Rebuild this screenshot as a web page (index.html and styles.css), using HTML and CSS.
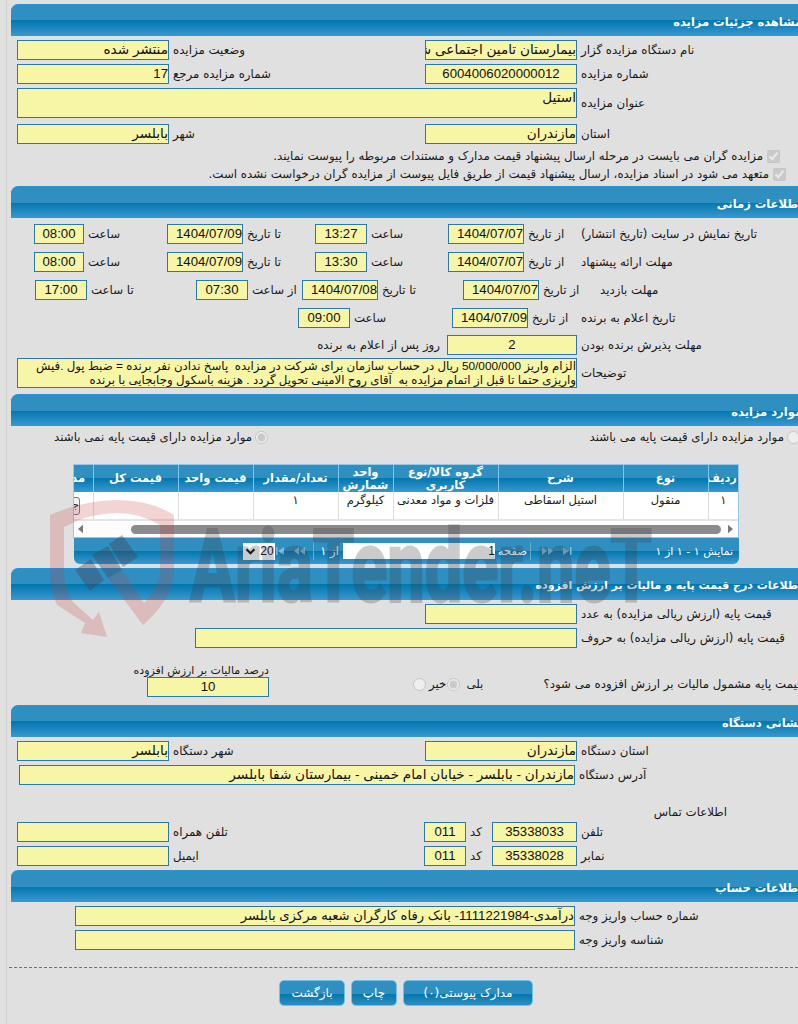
FILE: index.html
```html
<!DOCTYPE html>
<html lang="fa">
<head>
<meta charset="utf-8">
<title>مشاهده جزئیات مزایده</title>
<link rel="stylesheet" href="styles.css">
</head>
<body>
<main class="page">

<section class="section s1">
  <h2 class="bar">مشاهده جزئیات مزایده</h2>
  <div class="grid g-main">
    <div class="field">منتشر شده</div><div class="lab">وضعیت مزایده</div>
    <div class="field">بیمارستان تامین اجتماعی شهید بهشتی بابلسر</div><div class="lab">نام دستگاه مزایده گزار</div>
    <div class="field num">17</div><div class="lab">شماره مزایده مرجع</div>
    <div class="field num center">6004006020000012</div><div class="lab">شماره مزایده</div>
    <div class="field span3 tall">استیل</div><div class="lab">عنوان مزایده</div>
  </div>
  <div class="grid g-main after-tall">
    <div class="field">بابلسر</div><div class="lab">شهر</div>
    <div class="field">مازندران</div><div class="lab">استان</div>
  </div>
  <div class="check c1"><input type="checkbox" checked disabled><span>مزایده گران می بایست در مرحله ارسال پیشنهاد قیمت مدارک و مستندات مربوطه را پیوست نمایند.</span></div>
  <div class="check c2"><input type="checkbox" checked disabled><span>متعهد می شود در اسناد مزایده، ارسال پیشنهاد قیمت از طریق فایل پیوست از مزایده گران درخواست نشده است.</span></div>
</section>

<section class="section s2">
  <h2 class="bar">اطلاعات زمانی</h2>
  <div class="grid t-row t-a">
    <div class="field num center">08:00</div><div class="lab">ساعت</div>
    <div class="field num">1404/07/09</div><div class="lab">تا تاریخ</div>
    <div class="field num center">13:27</div><div class="lab">ساعت</div>
    <div class="field num">1404/07/07</div><div class="lab">از تاریخ</div>
    <div class="lab">تاریخ نمایش در سایت (تاریخ انتشار)</div>
  </div>
  <div class="grid t-row t-a">
    <div class="field num center">08:00</div><div class="lab">ساعت</div>
    <div class="field num">1404/07/09</div><div class="lab">تا تاریخ</div>
    <div class="field num center">13:30</div><div class="lab">ساعت</div>
    <div class="field num">1404/07/07</div><div class="lab">از تاریخ</div>
    <div class="lab">مهلت ارائه پیشنهاد</div>
  </div>
  <div class="grid t-row t-b">
    <div class="field num center">17:00</div><div class="lab">تا ساعت</div>
    <div class="field num center">07:30</div><div class="lab">از ساعت</div>
    <div class="field num">1404/07/08</div><div class="lab">تا تاریخ</div>
    <div class="field num">1404/07/07</div><div class="lab">از تاریخ</div>
    <div class="lab visit">مهلت بازدید</div>
  </div>
  <div class="grid t-row t-c">
    <div class="field num center">09:00</div><div class="lab">ساعت</div>
    <div class="field num">1404/07/09</div><div class="lab">از تاریخ</div>
    <div class="lab">تاریخ اعلام به برنده</div>
  </div>
  <div class="grid t-row t-d">
    <div class="lab end">روز پس از اعلام به برنده</div>
    <div class="field num center">2</div>
    <div class="lab">مهلت پذیرش برنده بودن</div>
  </div>
  <div class="grid t-e">
    <div class="field note">الزام واریز 50/000/000 ریال در حساب سازمان برای شرکت در مزایده &nbsp;پاسخ ندادن نفر برنده = ضبط پول .فیش واریزی حتما تا قبل از اتمام مزایده به &nbsp;آقای روح الامینی تحویل گردد . هزینه باسکول وجابجایی با برنده</div>
    <div class="lab">توضیحات</div>
  </div>
</section>

<section class="section s3">
  <h2 class="bar">موارد مزایده</h2>
  <div class="radios">
    <label class="radio r-right"><input type="radio" disabled><span>موارد مزایده دارای قیمت پایه می باشند</span></label>
    <label class="radio r-left"><input type="radio" checked disabled><span>موارد مزایده دارای قیمت پایه نمی باشند</span></label>
  </div>
  <div class="gridbox">
    <div class="tablewrap">
      <table class="items">
        <colgroup>
          <col class="c30"><col class="c85"><col class="c125"><col class="c105"><col class="c55"><col class="c85"><col class="c75"><col class="c85"><col class="c60">
        </colgroup>
        <thead>
          <tr><th>ردیف</th><th>نوع</th><th>شرح</th><th>گروه کالا/نوع کاربری</th><th>واحد شمارش</th><th>تعداد/مقدار</th><th>قیمت واحد</th><th>قیمت کل</th><th>مدارک</th></tr>
        </thead>
        <tbody>
          <tr><td>۱</td><td>منقول</td><td>استیل اسقاطی</td><td>فلزات و مواد معدنی</td><td>کیلوگرم</td><td>۱</td><td></td><td></td><td><span class="mini">جزئیات</span></td></tr>
        </tbody>
      </table>
    </div>
    <div class="hscroll">
      <svg class="sarrow" viewBox="0 0 6 10" aria-hidden="true"><path d="M6 0 0 5 6 10Z"/></svg>
      <div class="thumb"></div>
      <svg class="sarrow end-arrow" viewBox="0 0 6 10" aria-hidden="true"><path d="M0 0 6 5 0 10Z"/></svg>
    </div>
  </div>
  <div class="pager">
    <span class="p-info">نمایش ۱ - ۱ از ۱</span>
    <span class="p-nav">
      <svg class="pico" viewBox="0 0 14 8" aria-hidden="true"><path d="M12 0h1.500v8H12zM11 4 5 0v8z"/></svg>
      <svg class="pico" viewBox="0 0 14 8" aria-hidden="true"><path d="M7 4 2 0v8zM13 4 8 0v8z"/></svg>
    </span>
    <i class="sep"></i>
    <span class="p-lab">صفحه</span>
    <span class="p-input">1</span>
    <span class="p-lab">از ۱</span>
    <i class="sep sep2"></i>
    <span class="p-nav">
      <svg class="pico" viewBox="0 0 14 8" aria-hidden="true"><path d="M7 4l5-4v8zM1 4l5-4v8z"/></svg>
      <svg class="pico" viewBox="0 0 14 8" aria-hidden="true"><path d="M1 0h1.500v8H1zM3 4l6-4v8z"/></svg>
    </span>
    <span class="p-select"><span>20</span><svg class="chev" viewBox="0 0 12 8" aria-hidden="true"><path d="M1.500 1.500 6 6l4.500-4.500" /></svg></span>
  </div>
</section>

<section class="section s4">
  <h2 class="bar">اطلاعات درج قیمت پایه و مالیات بر ارزش افزوده</h2>
  <div class="grid g-wide">
    <div class="field"></div><div class="lab">قیمت پایه (ارزش ریالی مزایده) به عدد</div>
  </div>
  <div class="grid g-words">
    <div class="field"></div><div class="lab">قیمت پایه (ارزش ریالی مزایده) به حروف</div>
  </div>
  <div class="tax">
    <div class="tax-stack">
      <div class="tax-lab">درصد مالیات بر ارزش افزوده</div>
      <div class="field num center">10</div>
    </div>
    <label class="radio r-no"><input type="radio" disabled><span>خیر</span></label>
    <label class="radio r-yes"><input type="radio" checked disabled><span>بلی</span></label>
    <div class="tax-q">قیمت پایه مشمول مالیات بر ارزش افزوده می شود؟</div>
  </div>
</section>

<section class="section s5">
  <h2 class="bar">نشانی دستگاه</h2>
  <div class="grid g-main">
    <div class="field">بابلسر</div><div class="lab">شهر دستگاه</div>
    <div class="field">مازندران</div><div class="lab">استان دستگاه</div>
  </div>
  <div class="grid g-addr">
    <div class="field">مازندران - بابلسر - خیابان امام خمینی - بیمارستان شفا بابلسر</div><div class="lab">آدرس دستگاه</div>
  </div>
  <div class="contact-title">اطلاعات تماس</div>
  <div class="grid g-phone">
    <div class="field"></div><div class="lab">تلفن همراه</div>
    <div class="field num center">011</div><div class="lab mid">کد</div>
    <div class="field num center">35338033</div><div class="lab">تلفن</div>
  </div>
  <div class="grid g-phone">
    <div class="field"></div><div class="lab">ایمیل</div>
    <div class="field num center">011</div><div class="lab mid">کد</div>
    <div class="field num center">35338028</div><div class="lab">نمابر</div>
  </div>
</section>

<section class="section s6">
  <h2 class="bar">اطلاعات حساب</h2>
  <div class="grid g-acct">
    <div class="field num">درآمدی-1111221984- بانک رفاه کارگران شعبه مرکزی بابلسر</div><div class="lab">شماره حساب واریز وجه</div>
  </div>
  <div class="grid g-acct">
    <div class="field"></div><div class="lab">شناسه واریز وجه</div>
  </div>
</section>

<div class="actions">
  <button class="btn b-back" type="button">بازگشت</button>
  <button class="btn b-print" type="button">چاپ</button>
  <button class="btn b-docs" type="button">مدارک پیوستی(۰)</button>
</div>

</main>

<svg class="mark" viewBox="0 0 798 700" aria-hidden="true">
  <path class="m-red" fill-rule="evenodd" d="M50 515Q85 500 117 500Q150 500 174 515V572Q172 600 143 625L108 578 122 570 144 603Q160 585 160 572V525Q140 513 117 513Q90 513 64 527V575Q65 590 73 602L93 620 99 612 107 637 81 633 85 623 57 605Q50 590 50 572Z"/>
  <path class="m-gavel" d="M75 570 91 559 104 580 90 591ZM92 555 108 546 122 570 108 578ZM109 544 122 535 138 557 123 567Z"/>
  <text class="m-text" x="190" y="601" textLength="462" lengthAdjust="spacingAndGlyphs">AriaTender.neT</text>
</svg>
</body>
</html>
```

FILE: styles.css
```css
html, body {
  margin: 0;
  padding: 0;
  height: 1024px;
  overflow: hidden;
  background: #e0e0e0;
}
body {
  position: relative;
  font-family: "DejaVu Sans", Tahoma, sans-serif;
  font-size: 11.800px;
  color: #1a1a1a;
}
.page {
  margin-left: 6px;
  padding: 4px 0 0 4px;
  height: 1020px;
  width: 794px;
  border-left: 1px solid #d0d0d0;
}
.section { width: 794px; }
.bar {
  margin: 0;
  height: 32px;
  box-sizing: border-box;
  padding: 6px 3px 0 0;
  background: linear-gradient(#2f8fc0 0, #2f8fc0 50%, #0277ae 50%, #3a98cf 100%);
  border-top: 1px solid #2a93d4;
  border-top-left-radius: 7px;
  color: #fff;
  font-size: 11.500px;
  font-weight: bold;
  line-height: 22px;
  direction: rtl;
  text-align: right;
  white-space: nowrap;
  overflow: hidden;
}
.grid {
  display: grid;
  padding-left: 6px;
  row-gap: 4px;
  align-items: center;
}
.field {
  height: 18px;
  border: 1px solid #2a78ad;
  background: #f7f5a6;
  direction: rtl;
  text-align: right;
  white-space: nowrap;
  overflow: hidden;
  font-family: "Liberation Sans", "DejaVu Sans", sans-serif;
  font-size: 13.600px;
  line-height: 18px;
  color: #111;
}
.num { font-size: 13.200px; }
.center { text-align: center; }
.lab {
  direction: rtl;
  text-align: left;
  padding-left: 4px;
  white-space: nowrap;
  line-height: 18px;
}
.lab.end { text-align: right; padding: 0 7px 0 0; }
.s1 .grid { margin-top: 4px; }
.g-main { grid-template-columns: 152px 256px 152px 1fr; }
.span3 { grid-column: 1 / span 3; }
.tall { height: 28px; }
.s1 .after-tall { margin-top: 6px; }
.check {
  display: flex;
  flex-direction: row-reverse;
  align-items: center;
  height: 18px;
}
.check span { direction: rtl; }
.check input { margin: 0 0 0 4px; width: 13px; height: 13px; }
.c1 { margin-top: 3px; padding-right: 25px; }
.c2 { padding-right: 19px; }

.s2 { margin-top: 3px; }
.t-row { margin-top: 8px; height: 20px; }
.s2 .bar + .t-row { margin-top: 6px; }
.t-row .lab:last-child { padding-left: 0; }
.t-a { grid-template-columns: 50px 83px 76px 72px 52px 81px 76px 57px 1fr; padding-left: 23px; }
.t-b { grid-template-columns: 52px 109px 52px 54px 76px 85px 76px 42px 1fr; padding-left: 24px; }
.t-row .lab.visit { padding-left: 19px; }
.t-c { grid-template-columns: 52px 102px 76px 53px 1fr; padding-left: 287px; }
.t-d { grid-template-columns: 127px 130px 1fr; padding-left: 309px; margin-top: 7px; }
.t-row.t-d .lab:last-child { padding-left: 4px; }
.t-e { grid-template-columns: 560px 1fr; margin-top: 3px; }
.note { height: 28px; white-space: normal; font-size: 11.800px; line-height: 14px; }

.s3 { margin-top: 6px; }
.radios {
  display: flex;
  justify-content: space-between;
  height: 38px;
  box-sizing: border-box;
  padding: 3px 0 0 43px;
}
.radio { display: inline-flex; align-items: center; height: 16px; }
.radio span { direction: rtl; }
.radio input { margin: 0; width: 13px; height: 13px; order: 2; }
.r-left span { margin-right: 3px; }
.r-right { order: 2; margin-right: 5px; }
.r-right span { margin-right: 3px; }
.r-left { order: 1; }

.gridbox {
  margin-left: 62px;
  width: 666px;
  box-sizing: border-box;
  border: 1px solid #96c8e6;
  background: #fff;
}
.tablewrap { overflow: hidden; direction: rtl; }
.items {
  border-collapse: collapse;
  table-layout: fixed;
  width: 697px;
  direction: rtl;
}
.c30 { width: 30px; }
.c85 { width: 85px; }
.c125 { width: 125px; }
.c105 { width: 105px; }
.c55 { width: 55px; }
.c75 { width: 75px; }
.c60 { width: 52px; }
.items th {
  height: 27px;
  padding: 0 2px;
  background: linear-gradient(#2f8fc0 0, #2f8fc0 50%, #0277ae 50%, #3a98cf 100%);
  border-left: 1px solid #7cc6ea;
  color: #fff;
  font-size: 11.500px;
  line-height: 13px;
  font-weight: bold;
  white-space: normal;
  overflow: hidden;
}
.items td {
  height: 28px;
  box-sizing: border-box;
  padding: 1px 3px 0;
  vertical-align: top;
  text-align: center;
  border-left: 1px solid #dcdcdc;
  border-bottom: 2px solid #e4e4e4;
  font-size: 11.500px;
  line-height: 14px;
  white-space: nowrap;
  overflow: hidden;
}
.mini {
  display: inline-block;
  vertical-align: top;
  overflow: hidden;
  width: 24px;
  height: 16px;
  margin-top: 4px;
  border: 1px solid #777;
  border-radius: 3px;
  background: #f2f2f2;
  font-size: 11px;
}
.hscroll {
  display: flex;
  align-items: center;
  height: 16px;
  padding: 0 5px 0 4px;
  background: #fdfdfd;
}
.thumb { flex: 1; height: 9px; margin-left: 48px; border-radius: 5px; background: #8b8b8b; }
.sarrow { width: 5px; height: 10px; fill: #7a7a7a; }
.end-arrow { margin-left: 7px; }
.pager {
  margin-left: 63px;
  width: 665px;
  height: 26px;
  box-sizing: border-box;
  display: flex;
  align-items: center;
  direction: rtl;
  padding: 0 6px 0 0;
  background: linear-gradient(#2f8fc0 0, #2f8fc0 50%, #0277ae 50%, #3a98cf 100%);
  border-radius: 0 0 6px 6px;
  color: #fff;
  font-size: 11.500px;
}
.p-info { width: 76px; margin-left: 85px; font-size: 11px; white-space: nowrap; }
.p-nav { display: inline-flex; gap: 4px; margin-left: 9px; }
.sep2 + .p-nav { margin-left: 4px; }
.pico { width: 14px; height: 8px; fill: #7dbbdc; }
.sep { width: 1px; height: 18px; background: #6aa9c9; margin-left: 3px; }
.sep2 { margin-left: 6px; }
.p-lab { margin-left: 3px; }
.p-input {
  width: 152px;
  height: 14px;
  padding: 1px 0;
  background: #fff;
  color: #111;
  line-height: 14px;
  margin-left: 4px;
  text-align: right;
  font-family: "Liberation Sans", sans-serif;
  font-size: 12px;
}
.p-input + .p-lab { margin-left: 6px; }
.p-select {
  display: inline-flex;
  flex-direction: row-reverse;
  align-items: center;
  direction: ltr;
  justify-content: flex-end;
  gap: 4px;
  width: 32px;
  height: 17px;
  background: #fff;
  color: #111;
  margin-right: -4px;
  font-family: "Liberation Sans", sans-serif;
  font-size: 12px;
  box-sizing: border-box;
}
.chev { width: 11px; height: 7px; fill: none; stroke: #111; stroke-width: 2.400; margin-left: 2px; }

.s4 { margin-top: 4px; }
.s4 .bar { font-size: 11px; }
.g-wide { grid-template-columns: 414px 152px 1fr; padding-left: 0; margin-top: 4px; }
.g-wide .field { grid-column: 2; }
.g-wide .lab { grid-column: 3; }
.g-words { grid-template-columns: 382px 1fr; padding-left: 184px; margin-top: 4px; }
.tax {
  display: flex;
  align-items: flex-end;
  height: 53px;
  white-space: nowrap;
}
.tax-stack { margin-left: 123px; width: 135px; direction: rtl; display: flex; flex-direction: column; align-items: flex-start; margin-bottom: 4px; }
.tax-stack .field { width: 120px; }
.tax-lab { line-height: 12px; font-size: 11px; }
.r-no { margin-left: 144px; margin-bottom: 9px; }
.r-yes { margin-left: 1px; margin-bottom: 9px; }
.r-no input, .r-yes input { order: 0; margin-right: 3px; }
.r-yes input { margin-right: 6px; }
.tax-q { direction: rtl; margin-left: 60px; margin-bottom: 9px; line-height: 16px; }

.s5 { margin-top: 4px; }
.s5 .g-main { margin-top: 4px; }
.g-addr { grid-template-columns: 556px 1fr; padding-left: 8px; margin-top: 4px; }
.contact-title { direction: rtl; margin: 19px 0 0 644px; width: 72px; height: 18px; line-height: 17px; white-space: nowrap; text-align: left; }
.g-phone { grid-template-columns: 152px 255px 42px 26px 85px 1fr; margin-bottom: 4px; height: 20px; }
.s6 { margin-top: 0; }
.g-acct { grid-template-columns: 500px 1fr; padding-left: 64px; margin-top: 4px; }

.actions {
  margin: 17px 0 0 -2px;
  padding: 12px 0 0 270px;
  width: 519px;
  border-top: 1px dashed #3f7ea5;
  display: flex;
  gap: 6px;
}
.btn {
  height: 26px;
  padding: 0;
  border: 1px solid #6fc0ea;
  border-radius: 5px;
  background: linear-gradient(#2f8fc0 0, #2f8fc0 55%, #0278ae 55%, #2d8ec2 100%);
  color: #fff;
  font-family: "DejaVu Sans", Tahoma, sans-serif;
  font-size: 12px;
  direction: rtl;
}
.b-back { width: 66px; }
.b-print { width: 46px; }
.b-docs { width: 130px; }

.mark {
  position: absolute;
  left: 0;
  top: 0;
  width: 798px;
  height: 700px;
  pointer-events: none;
}
.m-red { fill: rgba(196, 60, 60, 0.22); }
.m-gavel { fill: rgba(70, 60, 80, 0.36); }
.m-text {
  font-family: Roboto, "DejaVu Sans", sans-serif;
  font-size: 100px;
  font-weight: 700;
  fill: #3c3c46;
  stroke: #3c3c46;
  stroke-width: 3px;
  opacity: 0.26;
}
```
